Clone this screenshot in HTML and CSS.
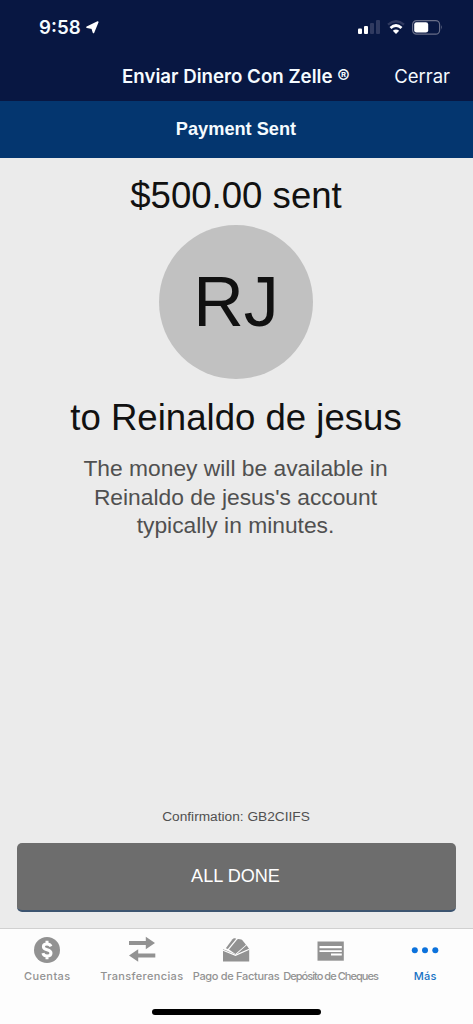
FILE: index.html
```html
<!DOCTYPE html>
<html lang="es">
<head>
<meta charset="utf-8">
<title>Enviar Dinero Con Zelle</title>
<link rel="stylesheet" href="styles.css">
</head>
<body>
<div class="screen">
  <header class="top">
    <div class="status">
      <div class="clock"><span class="time">9:58</span>
        <svg class="locate" width="13" height="13" viewBox="0 0 13 13"><path d="M11.800 1 7.500 11.500 6.100 7.100 1 6.200Z" fill="#fff" stroke="#fff" stroke-width="1.600" stroke-linejoin="round"/></svg>
      </div>
      <div class="signals">
        <svg width="22" height="14" viewBox="0 0 22 14"><g fill="#fff"><rect x="0" y="8.500" width="4" height="5.500" rx="1"/><rect x="6" y="6" width="4" height="8" rx="1"/></g><g fill="#303a60"><rect x="12" y="3" width="4" height="11" rx="1"/><rect x="18" y="0" width="4" height="14" rx="1"/></g></svg>
        <svg width="18" height="14" viewBox="0 0 18 14"><g fill="none" stroke-width="2.400"><path d="M1 4.700Q9-2 17 4.700" stroke="#303a60"/><path d="M3.500 8Q9 3 14.500 8" stroke="#fff" stroke-width="2.800"/></g><path d="M5.800 10.800Q9 8.200 12.200 10.800L9 14Z" fill="#fff"/></svg>
        <svg width="31" height="15" viewBox="0 0 31 15"><rect x=".6" y=".6" width="27" height="13.600" rx="4" fill="none" stroke="#686e88" stroke-width="1.200"/><rect x="2.200" y="2.200" width="14" height="10.400" rx="2.300" fill="#fff"/><path d="M29.200 5Q31 7.400 29.200 9.800Z" fill="#686e88"/></svg>
      </div>
    </div>
    <div class="nav">
      <h1 class="title">Enviar Dinero Con Zelle ®</h1>
      <span class="close">Cerrar</span>
    </div>
  </header>
  <div class="banner">Payment Sent</div>
  <main class="content">
    <div class="headline">$500.00 sent</div>
    <div class="avatar">RJ</div>
    <div class="headline recipient">to Reinaldo de jesus</div>
    <p class="note">The money will be available in<br>Reinaldo de jesus's account<br>typically in minutes.</p>
    <div class="confirmation">Confirmation: GB2CIIFS</div>
    <button class="done">ALL DONE</button>
  </main>
  <footer class="tabs">
    <div class="tab">
      <svg width="28" height="28" viewBox="0 0 28 28"><circle cx="14" cy="14" r="13" fill="#929292"/><path d="M18 10.400C17.200 8.600 15.900 8 14 8C11.700 8 10.400 9.200 10.400 10.700C10.400 14.700 18 12.800 18 17C18 19 16.300 20 14 20C11.900 20 10.400 19.300 9.900 17.200M14 4.800V8M14 20V23.200" fill="none" stroke="#fff" stroke-width="3"/></svg>
      <span class="label cuentas">Cuentas</span>
    </div>
    <div class="tab">
      <svg width="28" height="28" viewBox="0 0 28 28"><path d="M1 5H17.800V.8L27 7L17.800 13.200V9H1ZM27.300 17.500H10.200V13.300L1 19.500L10.200 25.700V21.500H27.300Z" fill="#929292"/></svg>
      <span class="label transferencias">Transferencias</span>
    </div>
    <div class="tab">
      <svg width="28" height="28" viewBox="0 0 28 28"><path d="M1 13.300 5 14.800 14 18.800 24.600 9.200 27.200 13V25.600H1Z" fill="#929292"/><path d="M1 14.200 13.500 19.400 27.200 13.200" fill="none" stroke="#fff" stroke-width="1.200"/><g fill="#929292"><path d="M3.800 12.200 10.500 3.300Q11.600 1.900 13 2.300L14.200 2.800 5.800 13Z"/><path d="M7 13.600 15.200 3.600Q15.800 2.900 16.600 3.100L19.200 3.500Q20 3.700 20.400 4.300L24 8.800 13.400 17.900Z"/></g></svg>
      <span class="label facturas">Pago de Facturas</span>
    </div>
    <div class="tab">
      <svg width="28" height="28" viewBox="0 0 28 28"><path d="M.5 5.500H26.800V24.700H.5Z" fill="#929292"/><path d="M2.500 10H24.800V12.200H2.500ZM2.500 14.300H24.800V16H2.500ZM14 17.500H24.800V19.500H14Z" fill="#fff"/></svg>
      <span class="label cheques">Depósito de Cheques</span>
    </div>
    <div class="tab active">
      <svg width="28" height="28" viewBox="0 0 28 28"><g fill="#0c72dc"><circle cx="3.800" cy="14.300" r="3"/><circle cx="14" cy="14.300" r="3"/><circle cx="24.300" cy="14.300" r="3"/></g></svg>
      <span class="label mas">Más</span>
    </div>
  </footer>
  <div class="home"><div class="indicator"></div></div>
</div>
</body>
</html>
```
FILE: styles.css
```css
* { box-sizing: border-box; }
body { margin: 0; font-family: "Liberation Sans", Arial, sans-serif; }
.screen { width: 473px; height: 1024px; display: flex; flex-direction: column; overflow: hidden; background: #fdfdfd; }
.top { height: 101px; background: #081742; color: #f5fbff; font-family: Inter, sans-serif; }
.status { height: 54px; padding: 0 30px 0 39px; display: flex; justify-content: space-between; align-items: center; }
.clock { display: flex; align-items: center; gap: 5px; padding-top: 1px; }
.time { font-size: 18.7px; font-weight: 600; line-height: 24px; }
.signals { display: flex; align-items: center; gap: 7px; }
.nav { height: 44px; padding: 0 23px 0 122px; display: flex; justify-content: space-between; align-items: center; white-space: nowrap; }
.title { margin: 0; font-size: 18.7px; font-weight: 600; }
.close { font-size: 18.5px; }
.banner { height: 57px; padding-right: 1px; background: #04366f; color: #f5fbff; font-size: 18.2px; font-weight: 700; line-height: 56px; text-align: center; }
.content { height: 771px; padding: 17px 17px 0 16px; background: #ebebeb; border-bottom: 1px solid #d0d0d0; display: flex; flex-direction: column; align-items: center; color: #111; }
.headline { font-size: 36.6px; line-height: 42px; white-space: nowrap; }
.avatar { width: 154px; height: 154px; margin-top: 8px; border-radius: 50%; background: #c1c1c1; font-size: 70px; line-height: 154px; text-align: center; }
.recipient { margin-top: 18px; }
.note { margin: 15px 1px 0 0; font-size: 22.8px; line-height: 28.7px; text-align: center; color: #505050; }
.confirmation { margin-top: auto; font-size: 13.7px; line-height: 16px; color: #505050; }
.done { width: 439px; height: 69px; flex: none; margin: 18px 0 16px; padding: 0 1px 0 0; border: 0; border-bottom: 2px solid #3c5470; border-radius: 5px; background: #6d6d6d; color: #fff; font: 18.1px "Liberation Sans", Arial, sans-serif; }
.tabs { height: 61px; padding-top: 7px; display: grid; grid-template-columns: repeat(5, 94.6px); font-family: Inter, sans-serif; color: #929292; }
.tab { display: flex; flex-direction: column; align-items: center; }
.tab svg { display: block; flex: none; }
.label { margin-top: 5px; font-size: 11px; font-weight: 500; line-height: 14px; white-space: nowrap; }
.cuentas { letter-spacing: .4px; }
.transferencias { letter-spacing: .35px; }
.facturas { letter-spacing: -.3px; margin-left: -1px; }
.cheques { letter-spacing: -.96px; margin-left: -1px; }
.active { padding-right: 1px; color: #1772c4; }
.mas { letter-spacing: .2px; }
.home { padding-top: 19px; display: flex; justify-content: center; }
.indicator { width: 169px; height: 6px; border-radius: 3px; background: #000; }
```
